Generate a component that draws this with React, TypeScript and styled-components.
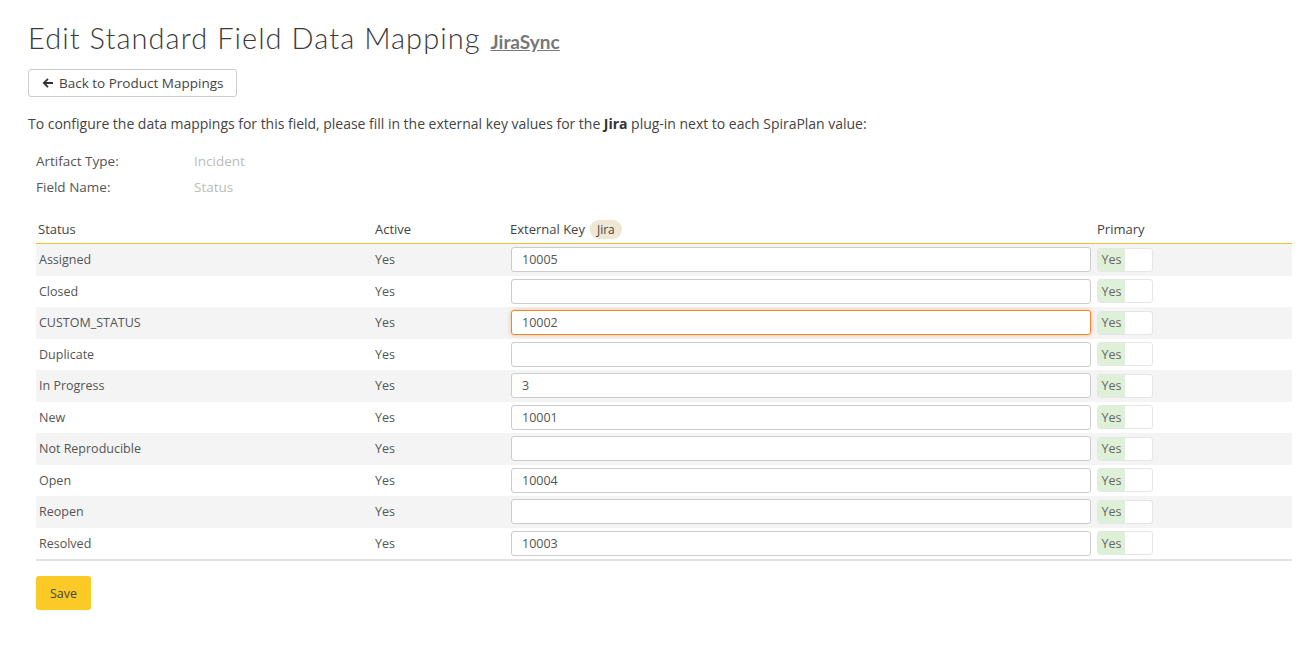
import React from "react";
import styled, { createGlobalStyle } from "styled-components";

const Global = createGlobalStyle`
  html, body { margin: 0; padding: 0; background: #fff; }
  body { font-family: "Open Sans", "Noto Sans", sans-serif; color: #555; }
  * { box-sizing: border-box; }
`;

const Page = styled.div`
  padding: 20px 15px 40px 28px;
`;

const Title = styled.h1`
  margin: 0;
  font-family: Lato, "Liberation Sans", sans-serif;
  font-weight: 300;
  font-size: 29px;
  color: #3a3a3a;
  letter-spacing: 1.05px;
  display: flex;
  align-items: baseline;
  gap: 10px;
  height: 36px;
`;

const TitleLink = styled.a`
  font-family: Lato, sans-serif;
  font-size: 19px;
  font-weight: 700;
  letter-spacing: 0;
  color: #777;
  text-decoration: underline;
`;

const BackButton = styled.button`
  margin-top: 13px;
  height: 28px;
  padding: 0 13px 0 13px;
  border: 1px solid #ccc;
  border-radius: 3px;
  background: #fff;
  font-family: "Open Sans", sans-serif;
  font-size: 13.5px;
  color: #444;
  display: inline-flex;
  align-items: center;
  gap: 5px;
`;

const Intro = styled.p`
  margin: 17px 0 0;
  font-size: 14px;
  color: #444;
  letter-spacing: -0.02px;
  b { font-weight: 700; color: #333; }
`;

const Meta = styled.div`
  margin: 19px 0 0 8px;
  display: grid;
  grid-template-columns: 158px auto;
  row-gap: 7px;
  font-size: 13.5px;
`;

const MetaLabel = styled.div`
  color: #555;
  height: 19px;
`;

const MetaValue = styled.div`
  color: #bbb;
`;

const Table = styled.div`
  margin: 20px 0 0 8px;
  border-bottom: 2px solid #e2e2e2;
`;

const Row = styled.div<{ $head?: boolean; $alt?: boolean }>`
  display: grid;
  grid-template-columns: 336px 136px 586px 1fr;
  align-items: center;
  height: ${(p) => (p.$head ? "27px" : "31.5px")};
  padding-bottom: ${(p) => (p.$head ? "2px" : "0")};
  background: ${(p) => (p.$alt ? "#f4f4f4" : "#fff")};
  border-bottom: ${(p) => (p.$head ? "1px solid #f0c232" : "none")};
  font-size: ${(p) => (p.$head ? "13px" : "12.5px")};
  color: ${(p) => (p.$head ? "#444" : "#555")};
`;

const Cell = styled.div<{ $pl?: number }>`
  padding-left: ${(p) => p.$pl ?? 2}px;
  display: flex;
  align-items: center;
  gap: 5px;
`;

const Badge = styled.span`
  background: #efe6d3;
  border-radius: 9px;
  padding: 1px 7px;
  font-size: 12px;
  color: #444;
`;

const KeyInput = styled.input<{ $focus?: boolean }>`
  width: 580px;
  height: 25px;
  border: 1px solid ${(p) => (p.$focus ? "#f5862a" : "#ccc")};
  border-radius: 3px;
  padding: 0 10px;
  font-family: "Open Sans", sans-serif;
  font-size: 12.5px;
  color: #555;
  outline: none;
  box-shadow: ${(p) => (p.$focus ? "0 0 4px rgba(245,134,42,0.5)" : "none")};
  background: #fff;
`;

const Toggle = styled.div`
  width: 56px;
  height: 24px;
  border: 1px solid #e6e6e6;
  border-radius: 3px;
  display: flex;
  overflow: hidden;
  background: #fff;
`;

const ToggleOn = styled.span`
  width: 27px;
  background: #dff0d8;
  color: #666;
  font-size: 12.5px;
  display: flex;
  align-items: center;
  justify-content: center;
`;

const SaveButton = styled.button`
  margin: 15px 0 0 8px;
  width: 55px;
  height: 34px;
  border: none;
  border-radius: 3px;
  background: #fcca26;
  color: #444;
  font-family: "Open Sans", sans-serif;
  font-size: 12.5px;
`;

const rows: [string, string, boolean?][] = [
  ["Assigned", "10005"],
  ["Closed", ""],
  ["CUSTOM_STATUS", "10002", true],
  ["Duplicate", ""],
  ["In Progress", "3"],
  ["New", "10001"],
  ["Not Reproducible", ""],
  ["Open", "10004"],
  ["Reopen", ""],
  ["Resolved", "10003"],
];

export default function App() {
  return (
    <Page>
      <Global />
      <Title>
        Edit Standard Field Data Mapping <TitleLink href="#">JiraSync</TitleLink>
      </Title>
      <BackButton>
        <svg width="12" height="12" viewBox="0 0 12 12">
          <path d="M11 6H2M6 1.8L1.8 6 6 10.2" fill="none" stroke="#333" strokeWidth="1.8" />
        </svg>
        Back to Product Mappings
      </BackButton>
      <Intro>
        To configure the data mappings for this field, please fill in the external key values for the <b>Jira</b> plug-in next to each SpiraPlan value:
      </Intro>
      <Meta>
        <MetaLabel>Artifact Type:</MetaLabel>
        <MetaValue>Incident</MetaValue>
        <MetaLabel>Field Name:</MetaLabel>
        <MetaValue>Status</MetaValue>
      </Meta>
      <Table>
        <Row $head>
          <Cell>Status</Cell>
          <Cell $pl={3}>Active</Cell>
          <Cell $pl={2}>
            External Key <Badge>Jira</Badge>
          </Cell>
          <Cell $pl={3}>Primary</Cell>
        </Row>
        {rows.map(([name, key, focus], i) => (
          <Row key={name} $alt={i % 2 === 0}>
            <Cell $pl={3}>{name}</Cell>
            <Cell $pl={3}>Yes</Cell>
            <Cell $pl={3}>
              <KeyInput $focus={focus} defaultValue={key} />
            </Cell>
            <Cell $pl={3}>
              <Toggle>
                <ToggleOn>Yes</ToggleOn>
              </Toggle>
            </Cell>
          </Row>
        ))}
      </Table>
      <SaveButton>Save</SaveButton>
    </Page>
  );
}
